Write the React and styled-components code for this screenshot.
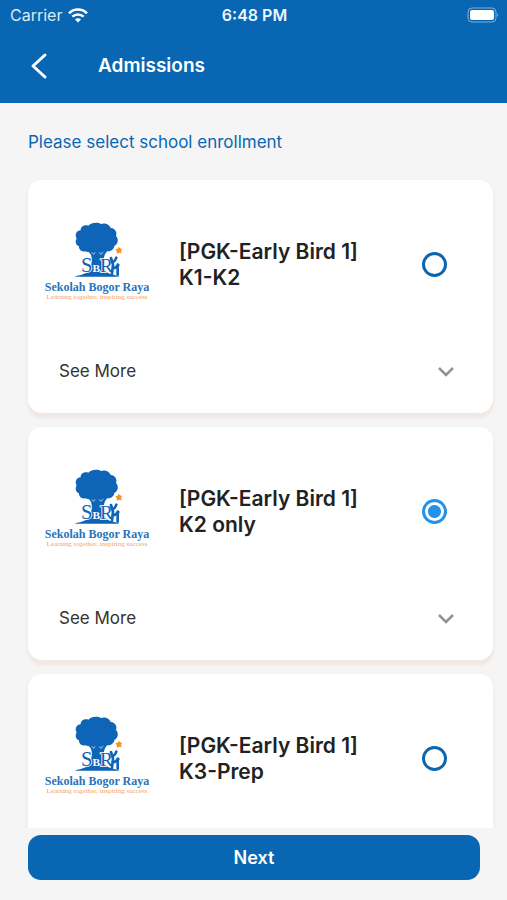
import React, { useState } from "react";
import styled, { createGlobalStyle } from "styled-components";

const blue = "#0966b3";

const GlobalStyle = createGlobalStyle`
  * { box-sizing: border-box; }
  body { margin: 0; background: #f5f5f5; }
  button, input { font-family: inherit; }
`;

const Screen = styled.div`
  display: flex;
  flex-direction: column;
  height: 100vh;
  background: #f5f5f5;
  color: #222;
  font-family: Inter, "Liberation Sans", sans-serif;
`;

const Header = styled.header`
  flex: none;
  background: ${blue};
  color: #fff;
`;

const StatusBar = styled.div`
  display: grid;
  grid-template-columns: 1fr auto 1fr;
  align-items: center;
  height: 30px;
  padding: 0 8px 0 10px;
  font-size: 16px;
  line-height: 20px;
`;

const Carrier = styled.div`
  display: flex;
  align-items: center;
  gap: 6px;
  color: #dceaf7;
`;

const Clock = styled.div`
  font-weight: 600;
  color: #eef5fc;
`;

const Battery = styled.svg`
  justify-self: end;
`;

const TitleBar = styled.div`
  display: flex;
  align-items: center;
  gap: 42px;
  height: 73px;
  padding: 0 22px 2px;
`;

const BackButton = styled.button`
  display: grid;
  place-items: center;
  width: 34px;
  height: 40px;
  padding: 0;
  border: 0;
  background: none;
  color: inherit;
`;

const PageTitle = styled.h1`
  margin: 0;
  font-size: 19px;
  line-height: 26px;
  font-weight: 600;
`;

const Main = styled.main`
  flex: 1;
  min-height: 0;
  display: flex;
  flex-direction: column;
`;

const Prompt = styled.h2`
  flex: none;
  margin: 0;
  padding: 26px 28px 0;
  font-size: 17px;
  line-height: 26px;
  font-weight: 400;
  color: ${blue};
`;

const List = styled.div`
  flex: 1;
  min-height: 0;
  margin-top: 13px;
  padding: 12px 14px 12px 28px;
  display: flex;
  flex-direction: column;
  gap: 14px;
  overflow-y: auto;
  scrollbar-width: none;
`;

const Card = styled.article`
  flex: none;
  padding: 42px 38px 29px 17px;
  border-radius: 14px;
  background: #fff;
  box-shadow: 0 5px 2px #f1e8e4, 0 3px 5px #ececec;
`;

const Choice = styled.label`
  display: flex;
  align-items: center;
  height: 85px;
`;

const Logo = styled.div`
  flex: none;
  display: flex;
  flex-direction: column;
  align-items: center;
  width: 104px;
  margin-right: 30px;
  padding-bottom: 6px;
  white-space: nowrap;
  font-family: "Liberation Serif", serif;
`;

const LogoName = styled.span`
  font-size: 12px;
  line-height: 14px;
  font-weight: 700;
  color: #2873bc;
`;

const LogoMotto = styled.span`
  font-size: 7px;
  line-height: 7px;
  color: #f5a45a;
`;

const Name = styled.span`
  flex: 1;
  font-size: 21px;
  line-height: 26px;
  font-weight: 600;
`;

const Line = styled.span`
  display: block;
`;

const Radio = styled.input`
  appearance: none;
  flex: none;
  width: 25px;
  height: 25px;
  margin: 0 8px;
  border: 3px solid ${blue};
  border-radius: 50%;
  background: #fff;

  &:checked {
    border-color: #2492eb;
    background: radial-gradient(circle, #2492eb 0 6px, #fff 7px);
  }
`;

const MoreButton = styled.button`
  display: flex;
  align-items: center;
  justify-content: space-between;
  width: 100%;
  margin-top: 51px;
  padding: 0 0 0 14px;
  border: 0;
  background: none;
  font-size: 17px;
  line-height: 26px;
  color: #333;
`;

const Footer = styled.footer`
  flex: none;
  padding: 7px 27px 20px 28px;
`;

const NextButton = styled.button`
  display: block;
  width: 100%;
  height: 45px;
  border: 0;
  border-radius: 13px;
  background: ${blue};
  color: #fff;
  font-size: 18px;
  font-weight: 600;
`;

const Mark = styled.svg`
  display: block;
`;

const Wifi = () => (
  <svg width="20" height="15" viewBox="0 0 20 15" fill="none" stroke="#fff" strokeWidth="2.5" aria-hidden="true">
    <path d="M1 5.3C6 .3 14 .3 19 5.3M4.3 8.7c3.3-3.1 8.1-3.1 11.4 0" />
    <path d="M7 11.5c1.7-1.6 4.3-1.6 6 0l-3 3z" fill="#fff" stroke="none" />
  </svg>
);

const SchoolLogo = () => (
  <Logo>
    <Mark width="50" height="58" viewBox="0 0 150 174" aria-hidden="true">
      <g fill="#0e64b6">
        <path d="M40 88C28 91 20 81 21 73C10 69 9 56 14 50C7 38 14 25 26 25C25 13 39 7 49 11C57 0 79 0 87 6C98 1 113 7 116 18C129 19 137 31 132 42C142 52 137 68 127 72C126 84 113 90 104 87C96 93 84 92 76 90C68 94 58 93 54 89C49 91 44 90 40 88Z" />
        <path d="M42 80L57 98C62 116 59 141 42 153C30 160 17 160 8 164H143C126 158 109 157 101 148C93 134 93 110 99 97L112 78Z" />
      </g>
      <path d="M59 91l6 6 4-6M82 91l4 6 8-7" fill="none" stroke="#fff" strokeWidth="2" />
      <text x="27" y="151" fontFamily="Liberation Serif, serif" fill="#0e64b6" stroke="#fff" strokeWidth="5" paintOrder="stroke">
        <tspan fontSize="62">S</tspan>
        <tspan fontSize="34" fontWeight="700" fill="#fff" stroke="none">B</tspan>
        <tspan fontSize="58">R</tspan>
      </text>
      <path d="M117 108l6 20-3 27M117 112q9 15 16-5M137 128v30M128 138l11-9" fill="none" stroke="#0e64b6" strokeWidth="8" strokeLinecap="round" />
      <path d="M140 74l4 5 6 2-3 6 2 7-8-2-6 3-1-8-4-5 7-2z" fill="#f39226" />
    </Mark>
    <LogoName>Sekolah Bogor Raya</LogoName>
    <LogoMotto>Learning together, inspiring success</LogoMotto>
  </Logo>
);

const programs = [
  { id: "k1-k2", group: "[PGK-Early Bird 1]", level: "K1-K2" },
  { id: "k2", group: "[PGK-Early Bird 1]", level: "K2 only" },
  { id: "k3", group: "[PGK-Early Bird 1]", level: "K3-Prep" },
];

export default function App() {
  const [selected, setSelected] = useState("k2");
  return (
    <Screen>
      <GlobalStyle />
      <Header>
        <StatusBar>
          <Carrier>Carrier <Wifi /></Carrier>
          <Clock>6:48 PM</Clock>
          <Battery width="33" height="16" viewBox="0 0 33 16" aria-hidden="true">
            <rect x="2" y="1" width="28" height="14" rx="4" fill="none" stroke="#7eafdb" />
            <rect x="4" y="3" width="24" height="10" rx="2" fill="#fff" />
            <path d="M31 6q2 2 0 4z" fill="#7eafdb" />
          </Battery>
        </StatusBar>
        <TitleBar>
          <BackButton type="button" aria-label="Back">
            <svg width="18" height="28" viewBox="0 0 18 28" fill="none" stroke="#fff" strokeWidth="3" strokeLinecap="round" strokeLinejoin="round">
              <path d="M15 3L3 14l12 11" />
            </svg>
          </BackButton>
          <PageTitle>Admissions</PageTitle>
        </TitleBar>
      </Header>
      <Main>
        <Prompt id="prompt">Please select school enrollment</Prompt>
        <List role="radiogroup" aria-labelledby="prompt">
          {programs.map((p) => (
            <Card key={p.id}>
              <Choice>
                <SchoolLogo />
                <Name>
                  <Line>{p.group}</Line>
                  <Line>{p.level}</Line>
                </Name>
                <Radio
                  type="radio"
                  name="program"
                  value={p.id}
                  checked={selected === p.id}
                  onChange={() => setSelected(p.id)}
                />
              </Choice>
              <MoreButton type="button">
                See More
                <svg width="18" height="12" viewBox="0 0 18 12" fill="none" stroke="#929292" strokeWidth="2.5" aria-hidden="true">
                  <path d="M2 3l7 7 7-7" />
                </svg>
              </MoreButton>
            </Card>
          ))}
        </List>
      </Main>
      <Footer>
        <NextButton type="button">Next</NextButton>
      </Footer>
    </Screen>
  );
}
